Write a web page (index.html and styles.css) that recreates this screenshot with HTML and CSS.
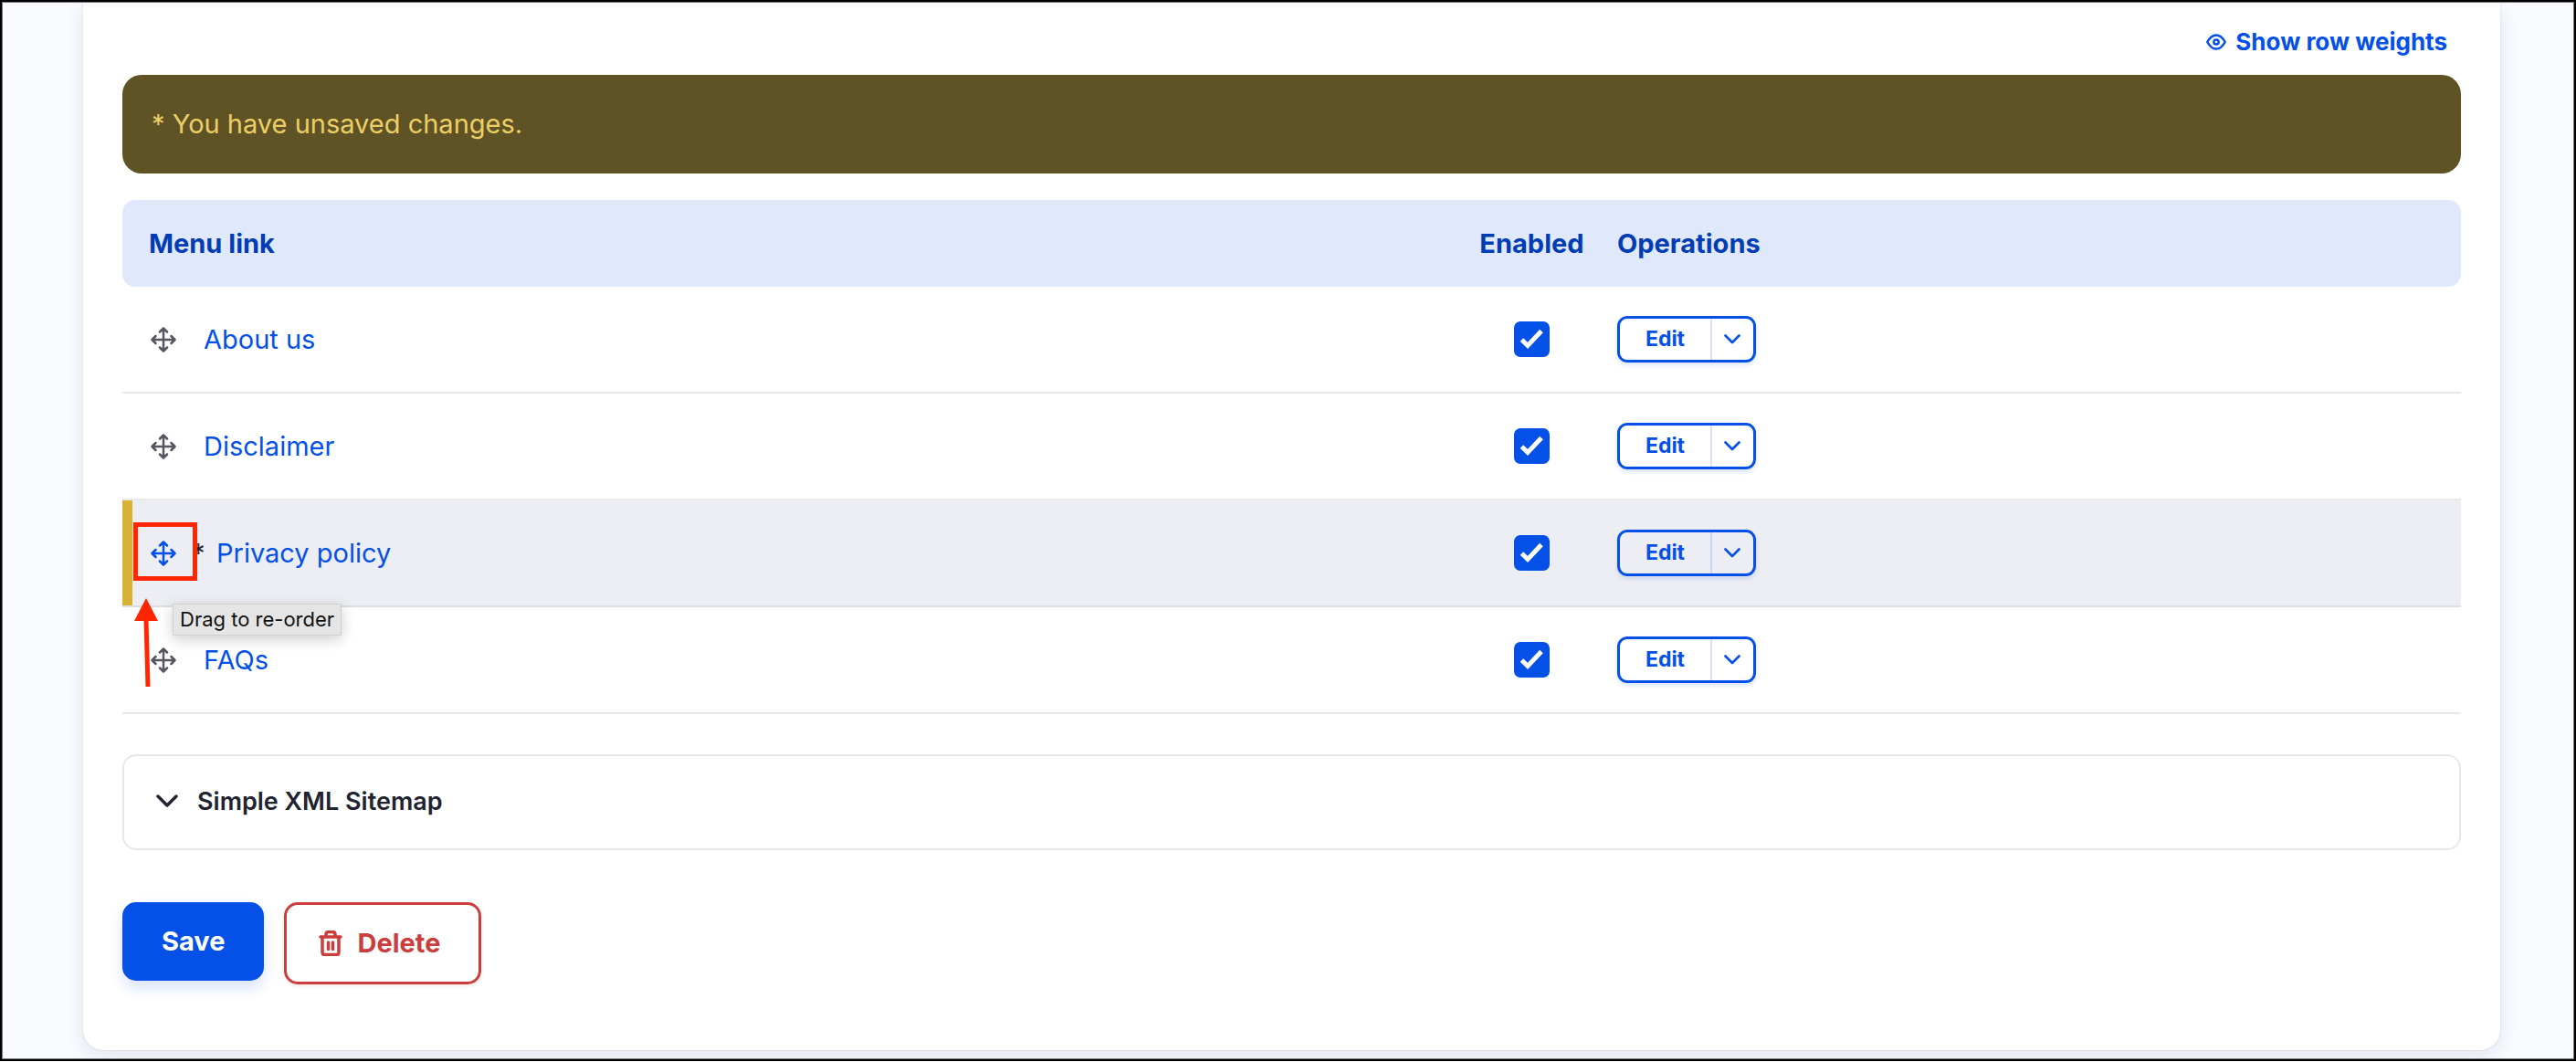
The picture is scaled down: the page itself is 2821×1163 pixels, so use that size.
FILE: index.html
```html
<!DOCTYPE html>
<html lang="en">
<head>
<meta charset="utf-8">
<meta name="viewport" content="width=device-width, initial-scale=1">
<title>Edit menu</title>
<link rel="stylesheet" href="styles.css">
</head>
<body>
<svg class="sprite" aria-hidden="true">
  <symbol id="move" viewBox="0 0 28 28"><path d="M14 2v24M2 14h24M10 5.500l4-4 4 4M10 22.500l4 4 4-4M5.500 10l-4 4 4 4M22.500 10l4 4-4 4"/></symbol>
  <symbol id="chevron" viewBox="0 0 24 16"><path d="M2 2l10 10 10-10"/></symbol>
</svg>
<div class="frame">
  <main class="card">
    <div class="weights">
      <button type="button" class="weights-toggle">
        <svg class="icon-eye" viewBox="0 0 22 18" aria-hidden="true"><path d="M1.300 9C4 4 7 1.500 11 1.500S18 4 20.700 9C18 14 15 16.500 11 16.500S4 14 1.300 9z"/><circle cx="11" cy="9" r="2.600"/></svg>
        Show row weights
      </button>
    </div>
    <div class="banner" role="alert">* You have unsaved changes.</div>
    <form class="menu-form">
      <table class="links">
        <colgroup><col class="col-link"><col class="col-enabled"><col></colgroup>
        <thead>
          <tr><th scope="col">Menu link</th><th scope="col" class="enabled">Enabled</th><th scope="col">Operations</th></tr>
        </thead>
        <tbody>
          <tr>
            <td><div class="link-cell"><a href="#" class="handle" aria-label="Drag to re-order"><svg><use href="#move"/></svg></a><a href="#">About us</a></div></td>
            <td class="enabled"><input type="checkbox" checked aria-label="Enable About us"></td>
            <td><div class="dropbutton"><button type="button" class="edit">Edit</button><button type="button" class="more" aria-label="More actions"><svg><use href="#chevron"/></svg></button></div></td>
          </tr>
          <tr>
            <td><div class="link-cell"><a href="#" class="handle" aria-label="Drag to re-order"><svg><use href="#move"/></svg></a><a href="#">Disclaimer</a></div></td>
            <td class="enabled"><input type="checkbox" checked aria-label="Enable Disclaimer"></td>
            <td><div class="dropbutton"><button type="button" class="edit">Edit</button><button type="button" class="more" aria-label="More actions"><svg><use href="#chevron"/></svg></button></div></td>
          </tr>
          <tr class="changed">
            <td>
              <div class="link-cell"><a href="#" class="handle" aria-label="Drag to re-order"><svg><use href="#move"/></svg></a><abbr>*</abbr><a href="#">Privacy policy</a></div>
              <span class="marker"></span>
              <svg class="arrow" viewBox="0 0 28 98" aria-hidden="true"><path class="head" d="M13 0l13 25H0z"/><path class="shaft" d="M13 24l2 73"/></svg>
              <span class="tooltip" role="tooltip">Drag to re-order</span>
            </td>
            <td class="enabled"><input type="checkbox" checked aria-label="Enable Privacy policy"></td>
            <td><div class="dropbutton"><button type="button" class="edit">Edit</button><button type="button" class="more" aria-label="More actions"><svg><use href="#chevron"/></svg></button></div></td>
          </tr>
          <tr>
            <td><div class="link-cell"><a href="#" class="handle" aria-label="Drag to re-order"><svg><use href="#move"/></svg></a><a href="#">FAQs</a></div></td>
            <td class="enabled"><input type="checkbox" checked aria-label="Enable FAQs"></td>
            <td><div class="dropbutton"><button type="button" class="edit">Edit</button><button type="button" class="more" aria-label="More actions"><svg><use href="#chevron"/></svg></button></div></td>
          </tr>
        </tbody>
      </table>
      <details class="sitemap">
        <summary><svg class="icon-open"><use href="#chevron"/></svg>Simple XML Sitemap</summary>
      </details>
      <div class="actions">
        <button type="submit" class="save">Save</button>
        <a href="#" class="delete">
          <svg class="icon-trash" viewBox="0 0 26 28" aria-hidden="true"><path d="M2 7h22M4 7v17q0 2.500 2.500 2.500h13q2.500 0 2.500-2.500V7M8 7V4.500q0-3 3-3h4q3 0 3 3V7M10.500 13v7.500M15.500 13v7.500"/></svg>
          Delete
        </a>
      </div>
    </form>
  </main>
</div>
</body>
</html>
```
FILE: styles.css
```css
* {
  box-sizing: border-box;
}

body {
  margin: 0;
  border: 2px solid #000;
  background: #f9fbff;
  color: #222330;
  font: 400 29px/36px Inter, "Liberation Sans", sans-serif;
}

.frame {
  border: 1px solid #777;
  padding: 0 80px 9px 88px;
  overflow: hidden;
}

.sprite {
  position: absolute;
  width: 0;
  height: 0;
}

svg {
  display: block;
  flex: none;
  fill: none;
  stroke: currentColor;
  stroke-linecap: round;
  stroke-linejoin: round;
}

a {
  color: #0550e6;
  text-decoration: none;
}

button {
  border: 0;
  padding: 0;
  background: none;
  color: inherit;
  font: inherit;
  cursor: pointer;
}

.card {
  padding: 25px 43px 72px;
  border-radius: 0 0 22px 22px;
  background: #fff;
  box-shadow: 0 0 2px rgba(0, 0, 0, .14), 0 6px 20px rgba(40, 60, 110, .12);
}

.weights {
  display: flex;
  justify-content: flex-end;
  padding: 0 15px 18px;
}

.weights-toggle {
  display: flex;
  align-items: center;
  gap: 10px;
  color: #0550e6;
  font-size: 26px;
  font-weight: 700;
}

.icon-eye {
  width: 22px;
  height: 18px;
  stroke-width: 2.5;
}

.banner {
  padding: 36px 32px;
  border-radius: 21px;
  background: #5f5326;
  color: #edce65;
}

.links {
  width: 100%;
  margin: 29px 0 44px;
  border-spacing: 0;
  table-layout: fixed;
}

.col-link {
  width: 57.75%;
}

.col-enabled {
  width: 129px;
}

.links th {
  height: 95px;
  padding: 0 29px;
  background: #e0e9fc;
  color: #003cb3;
  font-weight: 700;
  text-align: left;
}

.links th:first-child {
  border-radius: 14px 0 0 14px;
}

.links th:last-child {
  border-radius: 0 14px 14px 0;
}

.links td {
  position: relative;
  height: 117px;
  padding: 0 29px;
  border-bottom: 2px solid #e8e8ea;
}

.links .enabled {
  padding: 0;
  text-align: center;
}

.links .changed td {
  border-color: #dddee3;
  background: #edeef4;
}

.links .changed td:first-child {
  box-shadow: inset 11px 0 #d8b234;
}

.link-cell {
  display: flex;
  align-items: center;
}

.handle {
  margin: 0 30px 0 2px;
  color: #55565f;
}

.handle svg {
  width: 28px;
  height: 28px;
  stroke-width: 2.5;
}

.changed .handle {
  margin-right: 17px;
  color: #0550e6;
}

.link-cell abbr {
  width: 27px;
}

.marker {
  position: absolute;
  top: 24px;
  left: 12px;
  width: 70px;
  height: 64px;
  border: 5px solid #ff2600;
}

.arrow {
  position: absolute;
  z-index: 2;
  top: 107px;
  left: 13px;
  width: 28px;
  height: 98px;
}

.arrow .head {
  fill: #ff2600;
  stroke: none;
}

.arrow .shaft {
  stroke: #ff2600;
  stroke-width: 5;
  stroke-linecap: butt;
}

.tooltip {
  position: absolute;
  z-index: 2;
  top: 113px;
  left: 55px;
  padding: 0 7px;
  border: 1px solid #d0d0d0;
  background: #e5e5e5;
  box-shadow: 0 4px 16px rgba(0, 0, 0, .2);
  color: #111;
  font-size: 22px;
  line-height: 33px;
  white-space: nowrap;
}

input[type="checkbox"] {
  display: block;
  width: 39px;
  height: 39px;
  margin: 0 auto;
  border-radius: 7px;
  background: #0550e6 url("data:image/svg+xml,%3Csvg xmlns='http://www.w3.org/2000/svg' viewBox='0 0 39 39'%3E%3Cpath d='M8.500 20l6.500 6.500 15-16' fill='none' stroke='%23fff' stroke-width='5'/%3E%3C/svg%3E");
  appearance: none;
}

.dropbutton {
  display: flex;
  width: 152px;
  height: 51px;
  border: 3px solid #0550e6;
  border-radius: 11px;
  box-shadow: 0 3px 5px rgba(5, 80, 230, .14);
  color: #0550e6;
}

.edit {
  flex: 1;
  padding: 0 0 2px;
  font-size: 23px;
  font-weight: 700;
}

.more {
  display: flex;
  align-items: center;
  justify-content: center;
  width: 47px;
  border-left: 2px solid rgba(5, 80, 230, .16);
}

.more svg {
  width: 18px;
  height: 12px;
  stroke-width: 3.5;
}

.sitemap {
  border: 2px solid #e8e8ea;
  border-radius: 15px;
}

.sitemap summary {
  display: flex;
  align-items: center;
  gap: 21px;
  padding: 32px 35px 33px;
  font-size: 27px;
  font-weight: 600;
  list-style: none;
  cursor: pointer;
}

.icon-open {
  width: 24px;
  height: 16px;
  stroke-width: 3.5;
}

.actions {
  display: flex;
  align-items: flex-start;
  gap: 22px;
  margin-top: 57px;
  font-weight: 700;
}

.save {
  padding: 25px 43px;
  border-radius: 15px;
  background: #0550e6;
  box-shadow: 0 8px 16px rgba(5, 80, 230, .16);
  color: #fff;
}

.delete {
  display: flex;
  align-items: center;
  gap: 16px;
  padding: 24px 42px 24px 35px;
  border: 3px solid #cc3d3d;
  border-radius: 15px;
  box-shadow: 0 2px 4px rgba(204, 61, 61, .14);
  color: #cc3d3d;
}

.icon-trash {
  width: 26px;
  height: 28px;
  stroke-width: 3.5;
}
```
